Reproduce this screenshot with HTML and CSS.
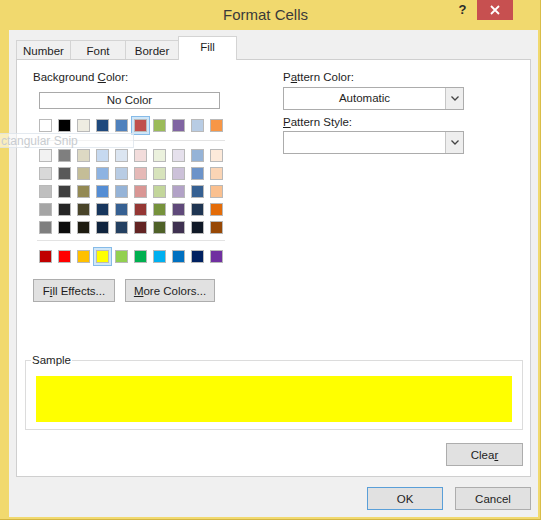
FILE: index.html
```html
<!DOCTYPE html>
<html>
<head>
<meta charset="utf-8">
<link rel="stylesheet" href="styles.css">
</head>
<body>
<div class="window">
  <div class="titlebar">
    <div class="title">Format Cells</div>
    <div class="help">?</div>
    <div class="close"><svg width="10" height="10" viewBox="0 0 10 10"><path d="M1 1 L9 9 M9 1 L1 9" stroke="#fff" stroke-width="1.8"/></svg></div>
  </div>
  <div class="client">
    <div class="tabs">
      <div class="tab t-number">Number</div>
      <div class="tab t-font">Font</div>
      <div class="tab t-border">Border</div>
      <div class="tab t-fill active">Fill</div>
    </div>
    <div class="panel">
      <div class="top">
        <div class="left">
          <div class="label">Background <u>C</u>olor:</div>
          <div class="nocolor">No Color</div>
          <div class="grid row1">
            <span class="sw" style="background:#ffffff"></span>
            <span class="sw" style="background:#000000"></span>
            <span class="sw" style="background:#eeece1"></span>
            <span class="sw" style="background:#1f497d"></span>
            <span class="sw" style="background:#4f81bd"></span>
            <span class="sw sel" style="background:#c0504d"></span>
            <span class="sw" style="background:#9bbb59"></span>
            <span class="sw" style="background:#8064a2"></span>
            <span class="sw" style="background:#b8cce4"></span>
            <span class="sw" style="background:#f79646"></span>
          </div>
          <div class="sep"></div>
          <div class="grid shades">
            <span class="sw" style="background:#f2f2f2"></span>
            <span class="sw" style="background:#7f7f7f"></span>
            <span class="sw" style="background:#ddd9c3"></span>
            <span class="sw" style="background:#c6d9f0"></span>
            <span class="sw" style="background:#dbe5f1"></span>
            <span class="sw" style="background:#f2dcdb"></span>
            <span class="sw" style="background:#ebf1dd"></span>
            <span class="sw" style="background:#e5e0ec"></span>
            <span class="sw" style="background:#95b3d7"></span>
            <span class="sw" style="background:#fdeada"></span>

            <span class="sw" style="background:#d8d8d8"></span>
            <span class="sw" style="background:#595959"></span>
            <span class="sw" style="background:#c4bd97"></span>
            <span class="sw" style="background:#8db3e2"></span>
            <span class="sw" style="background:#b8cce4"></span>
            <span class="sw" style="background:#e5b9b7"></span>
            <span class="sw" style="background:#d7e3bc"></span>
            <span class="sw" style="background:#ccc1d9"></span>
            <span class="sw" style="background:#6c93c9"></span>
            <span class="sw" style="background:#fbd5b5"></span>

            <span class="sw" style="background:#bfbfbf"></span>
            <span class="sw" style="background:#3f3f3f"></span>
            <span class="sw" style="background:#938953"></span>
            <span class="sw" style="background:#548dd4"></span>
            <span class="sw" style="background:#95b3d7"></span>
            <span class="sw" style="background:#d99694"></span>
            <span class="sw" style="background:#c3d69b"></span>
            <span class="sw" style="background:#b2a2c7"></span>
            <span class="sw" style="background:#366092"></span>
            <span class="sw" style="background:#fac08f"></span>

            <span class="sw" style="background:#a5a5a5"></span>
            <span class="sw" style="background:#262626"></span>
            <span class="sw" style="background:#494429"></span>
            <span class="sw" style="background:#17365d"></span>
            <span class="sw" style="background:#366092"></span>
            <span class="sw" style="background:#953734"></span>
            <span class="sw" style="background:#76923c"></span>
            <span class="sw" style="background:#5f497a"></span>
            <span class="sw" style="background:#1f3552"></span>
            <span class="sw" style="background:#e36c09"></span>

            <span class="sw" style="background:#7f7f7f"></span>
            <span class="sw" style="background:#0c0c0c"></span>
            <span class="sw" style="background:#1d1b10"></span>
            <span class="sw" style="background:#0f243e"></span>
            <span class="sw" style="background:#244061"></span>
            <span class="sw" style="background:#632423"></span>
            <span class="sw" style="background:#4f6128"></span>
            <span class="sw" style="background:#3f3151"></span>
            <span class="sw" style="background:#0f1826"></span>
            <span class="sw" style="background:#974806"></span>
          </div>
          <div class="sep sep2"></div>
          <div class="grid row-std">
            <span class="sw" style="background:#c00000"></span>
            <span class="sw" style="background:#ff0000"></span>
            <span class="sw" style="background:#ffc000"></span>
            <span class="sw sel" style="background:#ffff00"></span>
            <span class="sw" style="background:#92d050"></span>
            <span class="sw" style="background:#00b050"></span>
            <span class="sw" style="background:#00b0f0"></span>
            <span class="sw" style="background:#0070c0"></span>
            <span class="sw" style="background:#002060"></span>
            <span class="sw" style="background:#7030a0"></span>
          </div>
          <div class="btnrow">
            <button class="btn b-fill">F<u>i</u>ll Effects...</button>
            <button class="btn b-more"><u>M</u>ore Colors...</button>
          </div>
        </div>
        <div class="right">
          <div class="label">P<u>a</u>ttern Color:</div>
          <div class="combo">
            <div class="combo-text">Automatic</div>
            <div class="combo-btn"><svg width="8" height="5" viewBox="0 0 8 5"><path d="M0.5 0.5 L4 4 L7.5 0.5" fill="none" stroke="#444" stroke-width="1.3"/></svg></div>
          </div>
          <div class="label label2"><u>P</u>attern Style:</div>
          <div class="combo">
            <div class="combo-text"></div>
            <div class="combo-btn"><svg width="8" height="5" viewBox="0 0 8 5"><path d="M0.5 0.5 L4 4 L7.5 0.5" fill="none" stroke="#444" stroke-width="1.3"/></svg></div>
          </div>
        </div>
      </div>
      <fieldset class="sample">
        <legend>Sample</legend>
        <div class="fill"></div>
      </fieldset>
      <div class="clear-row">
        <button class="btn b-clear">Clea<u>r</u></button>
      </div>
    </div>
    <div class="footer">
      <button class="btn b-ok">OK</button>
      <button class="btn b-cancel">Cancel</button>
    </div>
  </div>
  <div class="snip">ctangular Snip</div>
</div>
</body>
</html>
```

FILE: styles.css
```css
html, body {
  margin: 0;
  padding: 0;
  background: #ffffff;
}
body {
  font-family: "Liberation Sans", Arial, sans-serif;
  font-size: 11.5px;
  color: #1e1e1e;
}
.window {
  position: relative;
  width: 541px;
  height: 520px;
  background: #f1d96e;
  display: flex;
  flex-direction: column;
  box-sizing: border-box;
  border-right: 1px solid #d9bd47;
  border-bottom: 1px solid #d2b443;
  overflow: hidden;
}
.titlebar {
  height: 30px;
  display: flex;
  align-items: flex-start;
  flex: none;
}
.title {
  flex: 1;
  text-align: center;
  padding-left: 83px;
  font-size: 15px;
  line-height: 29px;
  color: #3a3a3a;
}
.help {
  width: 29px;
  height: 20px;
  line-height: 20px;
  text-align: center;
  font-weight: bold;
  font-size: 13px;
  color: #2b2b2b;
}
.close {
  width: 36px;
  height: 20px;
  background: #c75050;
  display: flex;
  align-items: center;
  justify-content: center;
  margin-right: 27px;
}
.client {
  flex: 1;
  margin: 0 2px 2px 9px;
  background: #f0f0f0;
  display: flex;
  flex-direction: column;
  padding: 7px 7px 7px 7px;
  box-sizing: border-box;
}
.tabs {
  display: flex;
  align-items: flex-end;
  height: 22px;
  flex: none;
  position: relative;
  z-index: 1;
}
.tab {
  box-sizing: border-box;
  height: 19px;
  border: 1px solid #d4d4d4;
  border-bottom: none;
  background: #f0f0f0;
  text-align: center;
  line-height: 21px;
  overflow: hidden;
}
.tab + .tab { margin-left: -1px; }
.t-number { width: 55px; }
.t-font { width: 56px; }
.t-border { width: 54px; }
.t-fill {
  width: 59px;
  background: #ffffff;
  line-height: 21px;
  margin-bottom: -1px;
  height: 24px;
}
.panel {
  flex: 1;
  background: #ffffff;
  border: 1px solid #cfcfcf;
  box-sizing: border-box;
  padding: 10px 7px 9px 8px;
  display: flex;
  flex-direction: column;
}
.top {
  display: flex;
  padding-left: 8px;
}
.left {
  width: 250px;
}
.label {
  height: 15px;
  line-height: 15px;
}
.nocolor {
  margin: 7px 0 0 6px;
  width: 181px;
  height: 17px;
  box-sizing: border-box;
  border: 1px solid #a9a9a9;
  text-align: center;
  line-height: 15px;
}
.grid {
  display: grid;
  grid-template-columns: repeat(10, 13px);
  column-gap: 6px;
  row-gap: 5px;
  margin-left: 6px;
}
.row1 { margin-top: 10px; }
.sw {
  display: block;
  width: 13px;
  height: 13px;
  box-sizing: border-box;
  border: 1px solid #b9b9b9;
}
.sw.sel {
  box-shadow: 0 0 0 2px #cfe6f8, 0 0 0 3px #86bbe8;
}
.sep {
  height: 1px;
  background: #e3e3e3;
  margin: 8px 0 8px 4px;
  width: 188px;
}
.sep2 { margin: 6px 0 9px 4px; }
.btnrow {
  display: flex;
  gap: 10px;
  margin-top: 16px;
}
.btn {
  font-family: "Liberation Sans", Arial, sans-serif;
  font-size: 11.5px;
  color: #1e1e1e;
  height: 23px;
  box-sizing: border-box;
  background: #e1e1e1;
  border: 1px solid #adadad;
  border-radius: 0;
  padding: 0;
  margin: 0;
}
.b-fill { width: 82px; }
.b-more { width: 90px; }
.right {
  width: 181px;
}
.combo {
  margin-top: 2px;
  height: 23px;
  box-sizing: border-box;
  border: 1px solid #acacac;
  display: flex;
  background: #ffffff;
}
.combo-text {
  flex: 1;
  text-align: center;
  line-height: 21px;
}
.combo-btn {
  width: 17px;
  background: #eeeeee;
  border-left: 1px solid #c6c6c6;
  display: flex;
  align-items: center;
  justify-content: center;
}
.label2 { margin-top: 5px; }
.label2 + .combo { margin-top: 1px; }
.sample {
  margin: 51px 0 0 0;
  padding: 0 10px 7px 10px;
  border: 1px solid #dcdcdc;
  min-width: 0;
}
.sample legend {
  padding: 0 1px;
  margin-left: -5px;
  line-height: 14px;
}
.fill {
  margin-top: 9px;
  height: 46px;
  background: #ffff00;
}
.clear-row {
  display: flex;
  justify-content: flex-end;
  margin-top: 13px;
}
.b-clear { width: 77px; }
.footer {
  flex: none;
  display: flex;
  justify-content: flex-end;
  gap: 12px;
  margin-top: 10px;
}
.b-ok {
  width: 76px;
  border-color: #5a9fd8;
}
.b-cancel { width: 76px; }
.snip {
  position: absolute;
  left: 0;
  top: 133px;
  width: 134px;
  height: 15px;
  line-height: 14px;
  font-size: 12px;
  color: #c8ccd0;
  background: rgba(255, 255, 255, 0.55);
  border: 1px solid rgba(210, 220, 230, 0.6);
  border-left: none;
  padding-left: 1px;
  box-sizing: border-box;
}
```
